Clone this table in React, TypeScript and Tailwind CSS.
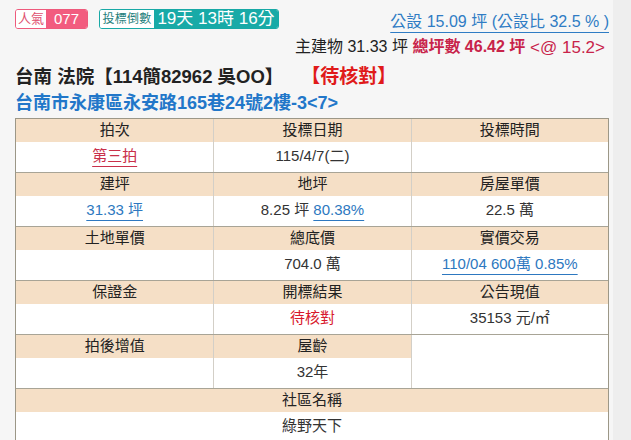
const font = { fontFamily: '"Liberation Sans", "Noto Sans CJK TC", sans-serif' };

type Cell = { head: string; value?: React.ReactNode };

const groups: Cell[][] = [
  [
    { head: '拍次', value: <span className="text-[#c9304a] underline decoration-[#c9304a] underline-offset-[5px]">第三拍</span> },
    { head: '投標日期', value: '115/4/7(二)' },
    { head: '投標時間' },
  ],
  [
    { head: '建坪', value: <span className="text-[#2d78c0] underline decoration-[#2d78c0] underline-offset-[5px]">31.33 坪</span> },
    {
      head: '地坪',
      value: (
        <span>
          8.25 坪{' '}
          <span className="text-[#2d78c0] underline decoration-[#2d78c0] underline-offset-[5px]">80.38%</span>
        </span>
      ),
    },
    { head: '房屋單價', value: '22.5 萬' },
  ],
  [
    { head: '土地單價' },
    { head: '總底價', value: '704.0 萬' },
    { head: '實價交易', value: <span className="text-[#2d78c0] underline decoration-[#2d78c0] underline-offset-[5px]">110/04 600萬 0.85%</span> },
  ],
  [
    { head: '保證金' },
    { head: '開標結果', value: <span className="text-[#d8182c]">待核對</span> },
    { head: '公告現值', value: '35153 元/㎡' },
  ],
];

const InfoGroup = ({ cells, first }: { cells: Cell[]; first?: boolean }) => (
  <div className={`grid grid-cols-3 ${first ? '' : 'border-t border-[#a8a496]'}`}>
    {cells.map((c, i) => (
      <div key={c.head} className={`flex flex-col ${i > 0 ? 'border-l border-[#d3cfc7]' : ''}`}>
        <div className="h-[23px] bg-[#f5dfc6] flex items-center justify-center text-[15px] text-[#222]">{c.head}</div>
        <div className="h-[30px] bg-white flex items-center justify-center text-[15px] text-[#333]">{c.value}</div>
      </div>
    ))}
  </div>
);

export default function App() {
  return (
    <div className="flex min-h-[440px] w-[631px] overflow-hidden" style={font}>
      <div className="w-[613px] shrink-0 bg-[#f6f6f6] pl-[15px] pr-[4px] pt-[9px]">
        {/* top badges + 公設 */}
        <div className="flex items-start justify-between">
          <div className="flex gap-[11px]">
            <div className="flex h-[20px] rounded-[3px] border border-[#ee5a7c] overflow-hidden">
              <span className="w-[30px] bg-white text-[#e0506f] text-[13px] flex items-center justify-center">人氣</span>
              <span className="w-[41px] bg-[#f25c7f] text-white text-[15px] flex items-center justify-center">077</span>
            </div>
            <div className="flex h-[20px] rounded-[3px] border border-[#18a9a6] overflow-hidden">
              <span className="w-[54px] bg-white text-[#1f7f7d] text-[12px] tracking-[0.3px] flex items-center justify-center whitespace-nowrap">投標倒數</span>
              <span className="w-[124px] bg-[#18aaa7] text-white text-[17px] flex items-center justify-center">19天 13時 16分</span>
            </div>
          </div>
          <span className="mt-[1px] text-[16px] text-[#2f7cc4] underline decoration-[#2f7cc4] underline-offset-[5px]">
            公設 15.09 坪 (公設比 32.5 % )
          </span>
        </div>
        <div className="mt-[1px] flex justify-end pr-[4px] text-[16px] text-[#222]">
          <span>主建物 31.33 坪&nbsp;</span>
          <span className="font-bold text-[#c8234a]">總坪數 46.42 坪</span>
          <span className="text-[#c8234a] text-[17px]">&nbsp;&lt;@ 15.2&gt;</span>
        </div>

        {/* title */}
        <div className="mt-[3px] flex items-center h-[27px]">
          <span className="text-[18.5px] font-bold text-[#222]">台南 法院【114簡82962 吳OO】</span>
          <span className="ml-[18px] text-[19px] font-bold text-[#e01a1a]">【待核對】</span>
        </div>
        <div className="h-[25px] flex items-center text-[18px] font-bold text-[#2277c9]">台南市永康區永安路165巷24號2樓-3&lt;7&gt;</div>

        {/* info table */}
        <div className="mt-[2px] w-[594px] border border-[#9c9787] bg-white">
          {groups.map((g, i) => (
            <InfoGroup key={i} cells={g} first={i === 0} />
          ))}
          <div className="grid grid-cols-3 border-t border-[#a8a496]">
            <div className="flex flex-col">
              <div className="h-[23px] bg-[#f5dfc6] flex items-center justify-center text-[15px] text-[#222]">拍後增值</div>
              <div className="h-[30px] bg-white" />
            </div>
            <div className="flex flex-col border-l border-[#d3cfc7]">
              <div className="h-[23px] bg-[#f5dfc6] flex items-center justify-center text-[15px] text-[#222]">屋齡</div>
              <div className="h-[30px] bg-white flex items-center justify-center text-[15px] text-[#333]">32年</div>
            </div>
            <div className="border-l border-[#d3cfc7] bg-white" />
          </div>
          <div className="border-t border-[#a8a496]">
            <div className="h-[23px] bg-[#f5dfc6] flex items-center justify-center text-[15px] text-[#222]">社區名稱</div>
            <div className="h-[30px] bg-white flex items-center justify-center text-[15px] text-[#333]">綠野天下</div>
          </div>
        </div>
      </div>
      <div className="flex-1 bg-[#eeeeee]" />
    </div>
  );
}
